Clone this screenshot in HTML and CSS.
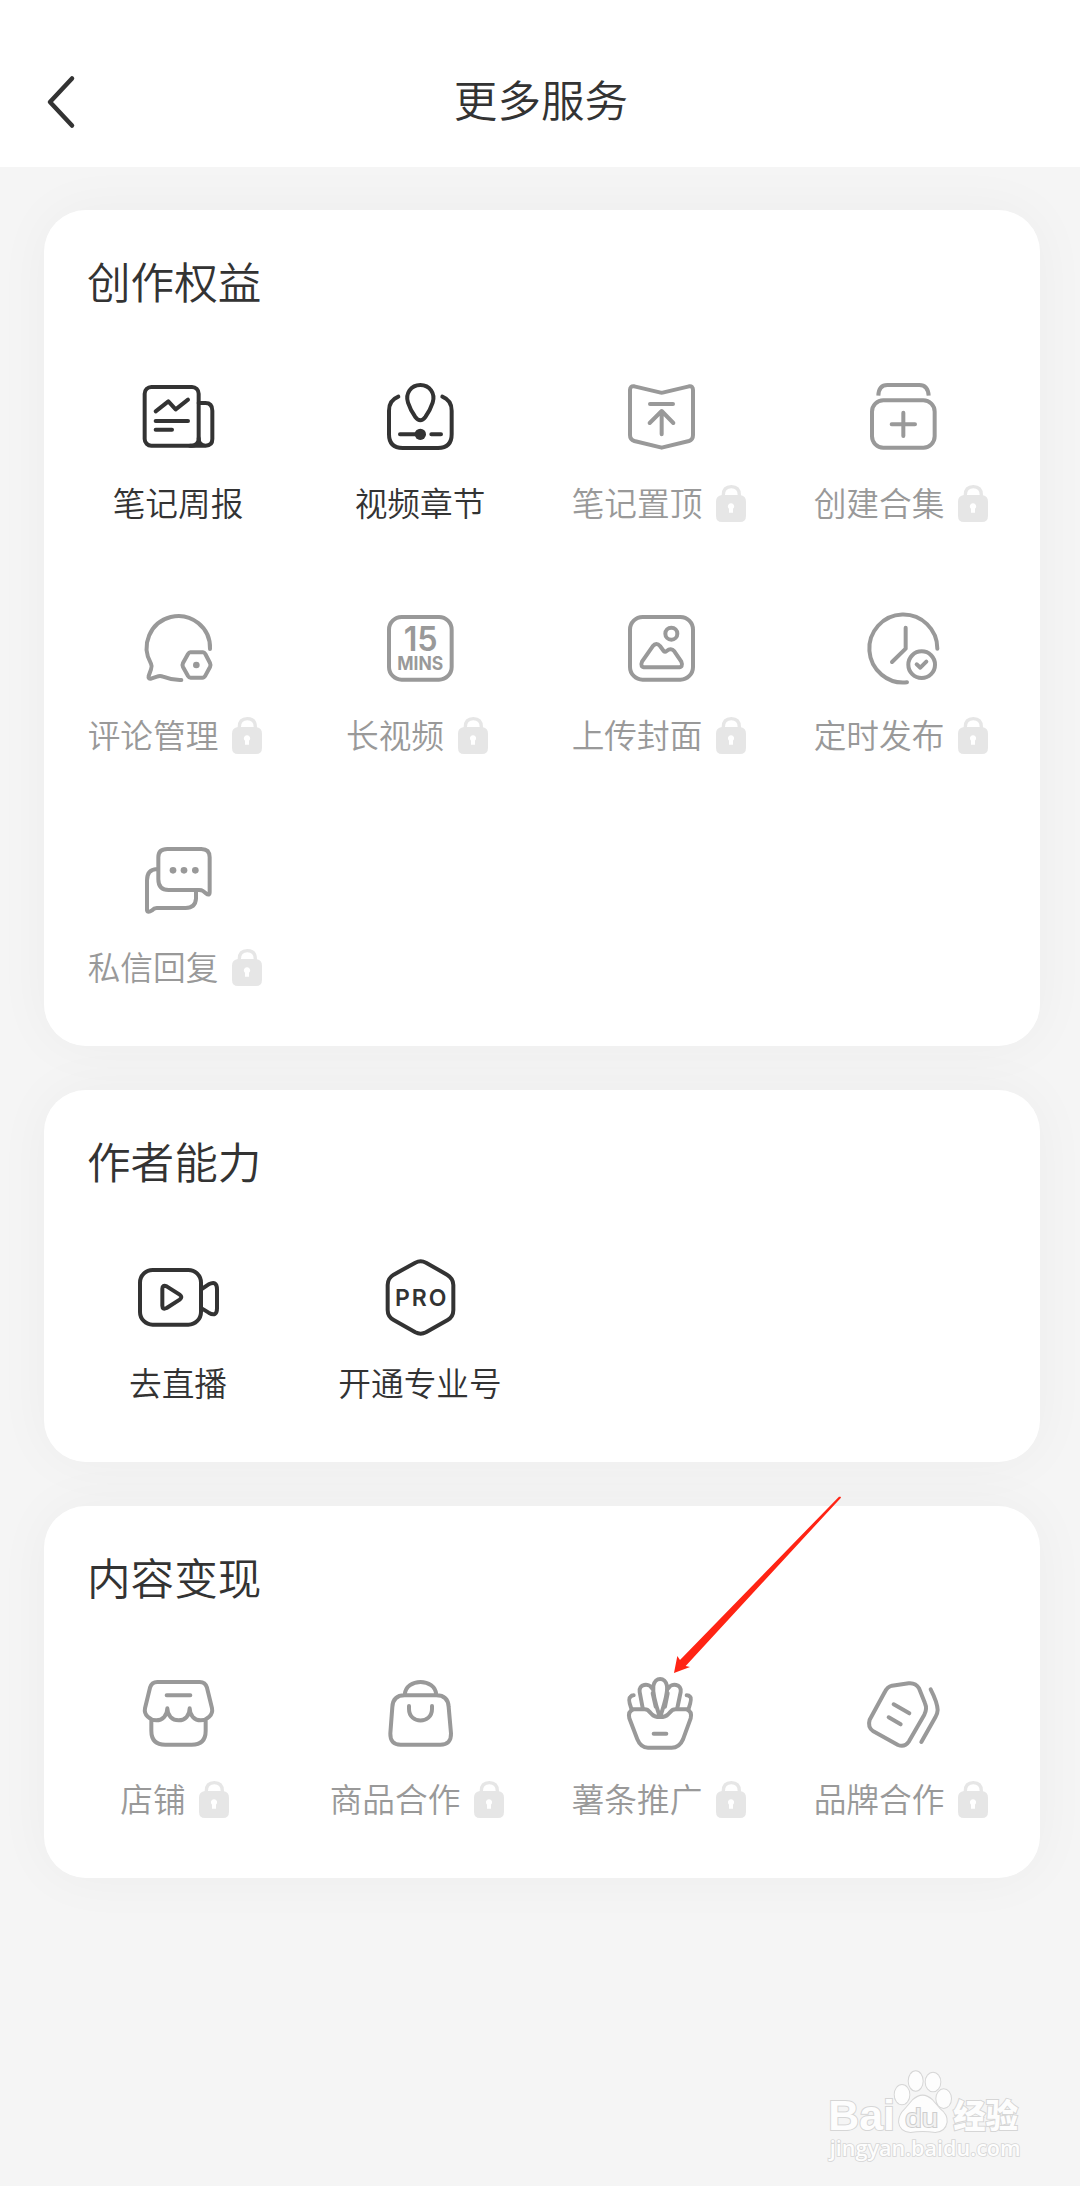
FILE: index.html
```html
<!DOCTYPE html>
<html lang="zh-CN">
<head>
<meta charset="utf-8">
<title>更多服务</title>
<link rel="stylesheet" href="styles.css">
</head>
<body>
<svg class="defs" aria-hidden="true">
  <symbol id="lock" viewBox="0 0 90 111">
    <path d="M22 40V30Q22 5 46 5T70 30V40" fill="none" stroke="#e6e6e6" stroke-width="10"/>
    <path fill="#e6e6e6" fill-rule="evenodd" d="M18 30H72Q90 32 90 50V92Q90 111 72 111H18Q0 111 0 92V50Q0 32 18 30ZM45 55A9 9 0 0 0 39 71V83H51V71A9 9 0 0 0 45 55Z"/>
  </symbol>
</svg>

<header class="navbar">
  <svg class="back" viewBox="0 0 30 54"><path d="M26 3.500L4 27L26 50.500"/></svg>
  <h1 class="page-title">更多服务</h1>
</header>

<main class="content">
  <section class="card">
    <h2 class="card-title">创作权益</h2>
    <div class="grid">
      <div class="item">
        <svg class="icon" viewBox="168 45 252 252">
          <rect x="194" y="81" width="162" height="176" rx="20"/>
          <path d="M356 129H376Q397 129 397 152V237Q397 257 377 257Q356 257 356 235M330 257H377M227 154L265 124L287 148L324 119M227 183H324M227 209H276"/>
        </svg>
        <div class="label">笔记周报</div>
      </div>
      <div class="item">
        <svg class="icon" viewBox="894 45 252 252">
          <path d="M955 110Q927 121 927 152V223Q927 264 968 264H1074Q1115 264 1115 223V152Q1115 121 1087 110M1021 75C993 75 975 101 984 128Q991 150 1006 171Q1021 191 1036 171Q1051 150 1058 128C1067 101 1049 75 1021 75ZM960 223H1010M1054 223H1083"/>
          <circle class="solid" cx="1021" cy="223" r="17"/>
        </svg>
        <div class="label">视频章节</div>
      </div>
      <div class="item locked">
        <svg class="icon" viewBox="180 45 252 252">
          <path d="M223 79L299 97Q305 99 311 97L387 79Q399 77 399 90V225Q399 239 387 243L305 263L223 243Q210 239 210 225V90Q210 77 223 79ZM270 132H339M305 223V153M269 189L305 153L340 189"/>
        </svg>
        <div class="label">笔记置顶<svg class="lock"><use href="#lock"/></svg></div>
      </div>
      <div class="item locked">
        <svg class="icon" viewBox="906 45 252 252">
          <path class="butt" d="M955 107Q956 75 982 75H1078Q1104 75 1106 107"/>
          <rect x="936" y="121" width="188" height="142" rx="34"/>
          <path d="M995 193H1065M1030 158V228"/>
        </svg>
        <div class="label">创建合集<svg class="lock"><use href="#lock"/></svg></div>
      </div>
      <div class="item locked">
        <svg class="icon" viewBox="168 51 252 252">
          <path d="M390 177A95 95 0 1 0 213 221Q217 229 213 238L206 258Q204 267 213 266L231 260Q240 256 249 260Q277 271 304 270"/>
          <path d="M331 187H369Q373 187 376 192L390 219Q393 225 390 231L376 257Q373 263 367 263H332Q327 263 324 258L309 231Q306 225 309 219L324 192Q327 187 331 187Z"/>
          <circle class="solid" cx="349" cy="225" r="10"/>
        </svg>
        <div class="label">评论管理<svg class="lock"><use href="#lock"/></svg></div>
      </div>
      <div class="item locked">
        <svg class="icon" viewBox="894 51 252 252">
          <rect x="927" y="81" width="188" height="188" rx="38"/>
          <text class="t15" x="1022" y="182" textLength="102" lengthAdjust="spacingAndGlyphs">15</text>
          <text class="tmins" x="1021" y="241" textLength="138" lengthAdjust="spacingAndGlyphs">MINS</text>
        </svg>
        <div class="label">长视频<svg class="lock"><use href="#lock"/></svg></div>
      </div>
      <div class="item locked">
        <svg class="icon" viewBox="180 51 252 252">
          <rect x="210" y="81" width="189" height="188" rx="38"/>
          <circle cx="334" cy="131" r="18"/>
          <path d="M246 215L278 169Q289 155 300 168L311 183Q315 187 320 183Q333 172 343 184L364 215Q371 232 354 232H256Q239 232 246 215Z"/>
        </svg>
        <div class="label">上传封面<svg class="lock"><use href="#lock"/></svg></div>
      </div>
      <div class="item locked">
        <svg class="icon" viewBox="906 51 252 252">
          <path d="M1132 176A102 102 0 1 0 1041 277M1037 113V176L996 216M1070 223L1081 233L1099 215"/>
          <circle cx="1085" cy="224" r="40"/>
        </svg>
        <div class="label">定时发布<svg class="lock"><use href="#lock"/></svg></div>
      </div>
      <div class="item locked">
        <svg class="icon" viewBox="318 57 252 252">
          <path d="M412 87H514Q539 87 539 112V216Q539 229 528 220L519 213Q515 210 507 210H416Q385 210 385 178V112Q385 87 412 87ZM380 147Q351 149 351 181V270Q353 280 366 271Q372 264 380 264H467Q496 264 498 236V214"/>
          <g class="solid"><circle cx="429" cy="151" r="10"/><circle cx="462" cy="151" r="10"/><circle cx="496" cy="151" r="10"/></g>
        </svg>
        <div class="label">私信回复<svg class="lock"><use href="#lock"/></svg></div>
      </div>
    </div>
  </section>

  <section class="card">
    <h2 class="card-title">作者能力</h2>
    <div class="grid">
      <div class="item">
        <svg class="icon" viewBox="168 405 252 252">
          <rect x="180" y="450" width="183" height="164" rx="38"/>
          <path d="M365 507L386 493Q411 480 411 508V565Q411 592 386 578L365 565M247 506V557Q247 570 260 564L299 539Q309 531 299 524L260 499Q247 493 247 506Z"/>
        </svg>
        <div class="label">去直播</div>
      </div>
      <div class="item">
        <svg class="icon" viewBox="894 405 252 252">
          <path d="M1006 428Q1022 420 1038 428L1101 464Q1120 475 1120 495V570Q1120 590 1103 600L1038 637Q1022 645 1006 637L941 600Q923 590 923 570V495Q923 475 941 464Z"/>
          <text class="tpro" x="1022" y="558" textLength="154" lengthAdjust="spacing">PRO</text>
        </svg>
        <div class="label">开通专业号</div>
      </div>
    </div>
  </section>

  <section class="card">
    <h2 class="card-title">内容变现</h2>
    <div class="grid">
      <div class="item locked">
        <svg class="icon" viewBox="168 393 252 252">
          <path d="M232 426H359Q376 426 381 443L396 505C400 524 382 541 362 541C344 541 329 527 329 505C329 527 315 541 296 541C277 541 262 527 262 505C262 527 247 541 229 541C209 541 191 524 195 505L210 443Q215 426 232 426ZM260 466H331M214 541V572Q214 614 256 614H335Q377 614 377 572V541"/>
        </svg>
        <div class="label">店铺<svg class="lock"><use href="#lock"/></svg></div>
      </div>
      <div class="item locked">
        <svg class="icon" viewBox="894 393 252 252">
          <path d="M974 466H1069Q1104 466 1106 501L1113 580Q1114 614 1081 614H962Q930 614 931 580L937 501Q939 466 974 466ZM974 464C978 413 1065 413 1069 464M987 498V507C987 553 1056 553 1056 507V498"/>
        </svg>
        <div class="label">商品合作<svg class="lock"><use href="#lock"/></svg></div>
      </div>
      <div class="item locked">
        <svg class="icon" viewBox="180 573 252 252">
          <path d="M220 688H254Q263 688 269 696L276 703Q283 711 300 711T324 703L331 696Q337 688 347 688H380Q397 694 392 715L369 778Q358 803 335 803H264Q242 803 232 778L208 715Q203 694 220 688ZM281 761H319"/>
          <path d="M297 703C283 661 278 634 280 618C285 590 316 590 321 618C323 634 317 661 303 703M248 684L239 636C235 612 267 608 276 625M352 684L362 636C366 612 334 608 325 625M287 680L278 640M315 680L323 640M214 686Q203 656 211 651Q215 646 221 646M386 686Q396 656 391 651Q387 646 380 646"/>
        </svg>
        <div class="label">薯条推广<svg class="lock"><use href="#lock"/></svg></div>
      </div>
      <div class="item locked">
        <svg class="icon" viewBox="906 573 252 252">
          <path d="M996 617L1046 610Q1067 608 1077 625L1095 670Q1102 686 1093 704L1047 784Q1034 803 1014 795L940 754Q922 743 929 719L974 637Q982 620 996 617ZM1112 628Q1132 667 1133 690Q1133 699 1126 712L1084 786M1001 673L1048 700M986 712L1022 733"/>
        </svg>
        <div class="label">品牌合作<svg class="lock"><use href="#lock"/></svg></div>
      </div>
    </div>
    <svg class="arrow" viewBox="330 40 520 550">
      <path d="M837 51L842 51L843 54L377 559L390 562L342 580L352 529L360 541Z"/>
    </svg>
  </section>
</main>

<svg class="watermark" viewBox="80 80 590 295">
  <g class="mark">
    <text class="bai" x="84" y="269" textLength="200" lengthAdjust="spacingAndGlyphs">Bai</text>
    <ellipse cx="305" cy="163" rx="22" ry="29"/><ellipse cx="346" cy="122" rx="21" ry="29"/><ellipse cx="398" cy="125" rx="22" ry="28"/><ellipse cx="430" cy="175" rx="22" ry="28"/>
    <path d="M337 180Q367 152 396 180L419 207Q441 223 439 245Q434 273 405 275Q367 269 330 275Q299 273 296 245Q297 222 314 207Z"/>
    <text class="du" x="315" y="259" textLength="98" lengthAdjust="spacingAndGlyphs">du</text>
    <text class="jy" x="459" y="263" textLength="194" lengthAdjust="spacingAndGlyphs">经验</text>
    <text class="url" x="88" y="348" textLength="573" lengthAdjust="spacingAndGlyphs">jingyan.baidu.com</text>
  </g>
</svg>
</body>
</html>
```

FILE: styles.css
```css
* {
  box-sizing: border-box;
}

body {
  position: relative;
  margin: 0;
  width: 1080px;
  height: 2186px;
  overflow: hidden;
  background: #f5f5f5;
  color: #333;
  font-family: "Noto Sans CJK SC", "Liberation Sans", sans-serif;
}

.defs {
  display: none;
}

.navbar {
  position: relative;
  z-index: 1;
  display: flex;
  align-items: center;
  justify-content: center;
  height: 167px;
  padding: 29px 0 0 2px;
  background: #fff;
}

.back {
  position: absolute;
  left: 46px;
  top: 75px;
  width: 30px;
  height: 54px;
  fill: none;
  stroke: #333;
  stroke-width: 4.5;
  stroke-linecap: round;
  stroke-linejoin: round;
}

.page-title,
.card-title {
  margin: 0;
  font-size: 43.600px;
  font-weight: 350;
  line-height: 52px;
}

.content {
  position: relative;
  z-index: 0;
  display: flex;
  flex-direction: column;
  gap: 44px;
  padding: 43px 40px 0 44px;
}

.card {
  position: relative;
  padding: 44px 14px 0 13px;
  border-radius: 42px;
  background: #fff;
}

/* The shadow sits below every card, so neighbours stay pure white. */
.card::before {
  content: "";
  position: absolute;
  inset: 0;
  z-index: -1;
  border-radius: 42px;
  box-shadow: 0 0 56px rgba(0, 0, 0, 0.04);
}

.card-title {
  padding-left: 30px;
}

.grid {
  display: grid;
  grid-template-columns: repeat(4, 242px);
  grid-auto-rows: 232px;
  margin-top: 44px;
}

.item {
  display: flex;
  flex-direction: column;
  align-items: center;
  gap: 21px;
  padding-top: 25px;
}

.icon {
  width: 84px;
  height: 84px;
  fill: none;
  stroke: #333;
  stroke-width: 12;
  stroke-linecap: round;
  stroke-linejoin: round;
}

.icon .solid {
  fill: #333;
  stroke: none;
}

.icon .butt {
  stroke-linecap: butt;
}

.icon text {
  fill: #333;
  stroke: none;
  font-family: Inter, "Liberation Sans", sans-serif;
  font-weight: 600;
  text-anchor: middle;
}

.icon .t15 {
  font-size: 101px;
}

.icon .tmins {
  font-size: 56px;
  font-weight: 700;
}

.icon .tpro {
  font-size: 69px;
}

.locked .icon {
  stroke: #999;
}

.locked .icon text,
.locked .icon .solid {
  fill: #999;
}

.label {
  display: flex;
  align-items: center;
  height: 44px;
  font-size: 32.700px;
  font-weight: 350;
  line-height: 44px;
  white-space: nowrap;
}

.locked .label {
  color: #999;
}

.lock {
  width: 30px;
  height: 37px;
  margin: 3px 6.500px 0 13.500px;
}

.arrow {
  position: absolute;
  left: 626px;
  top: -13px;
  width: 173.300px;
  height: 183.300px;
  fill: #ff2414;
}

.watermark {
  position: absolute;
  left: 826.700px;
  top: 2066.700px;
  width: 196.700px;
  height: 98.300px;
}

.mark {
  fill: #fdfdfd;
  stroke: #d6d6d6;
  stroke-width: 6;
  paint-order: stroke;
  font-family: "Liberation Sans", sans-serif;
  font-weight: 700;
}

.bai {
  font-size: 130px;
}

.du {
  fill: #f2f2f2;
  stroke: #cecece;
  font-size: 78px;
  font-weight: 400;
}

.jy {
  font-family: "Noto Sans CJK SC", sans-serif;
  font-size: 98px;
  font-weight: 900;
}

.url {
  font-family: "Open Sans", sans-serif;
  font-size: 64px;
  font-weight: 600;
  stroke-width: 5;
}
```
